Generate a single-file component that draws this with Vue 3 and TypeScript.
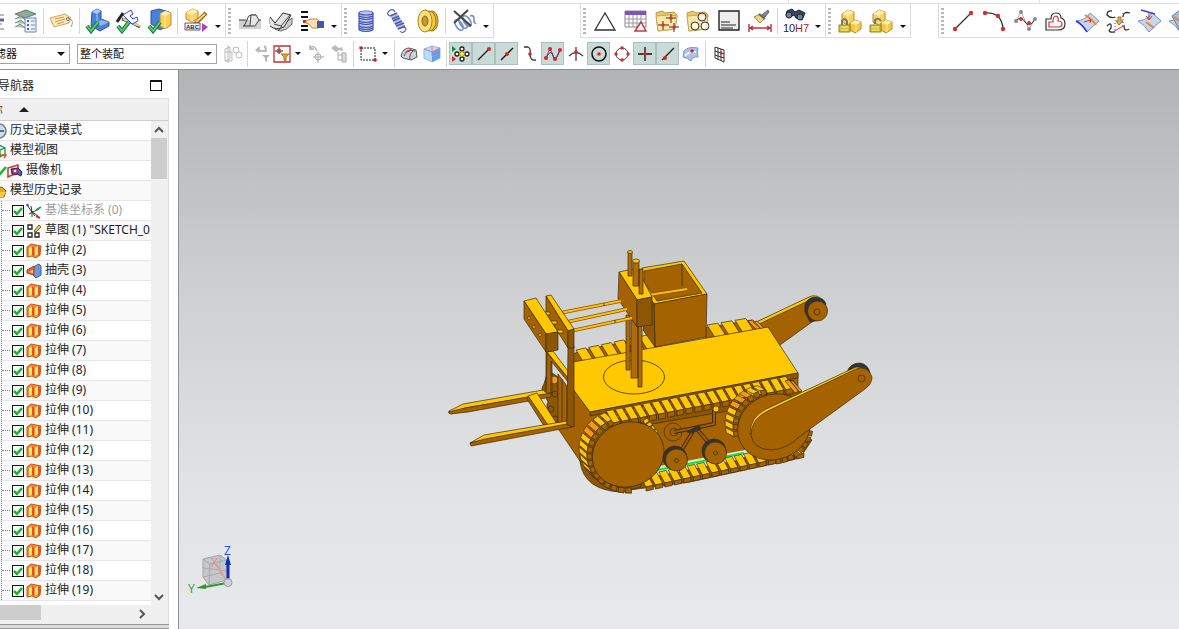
<script setup lang="ts">
interface Tool {
  kind: 'icon' | 'sep' | 'more' | 'grip'
  icon?: string
  label?: string
  on?: boolean
  narrow?: boolean
}
interface Cleat {
  top: string
  end: string
}
interface TreeRow {
  label: string
  icon: string
  level: 0 | 1 | 2
  muted?: boolean
}

const tool = (icon: string, label: string, on = false): Tool => ({ kind: 'icon', icon, label, on })
const sep: Tool = { kind: 'sep' }
const more: Tool = { kind: 'more', label: '更多' }
const grip: Tool = { kind: 'grip' }

const leftBars: Tool[][] = [
  [tool('rows', '列表'), tool('layers', '图层'), sep, tool('tag', '属性'), sep, tool('blockCheck', '检查几何体'), tool('sketchCheck', '检查草图'), tool('partCheck', '检查部件'), sep, tool('note', '注释'), more],
  [grip, tool('bendFlat', '凸起'), tool('bendCurve', '曲面凸起'), tool('hand', '选择'), more],
  [grip, tool('coil', '圆柱弹簧'), tool('spring', '拉伸弹簧'), tool('disc', '碟簧'), sep, tool('cutSpring', '删除弹簧'), more],
]
const midBars: Tool[][] = [
  [grip, tool('triangle', '基准'), tool('table', '表格'), tool('folderPoints', '点集'), tool('folderCircles', '圆集'), tool('textBox', '文本'), tool('brush', '样式'), sep, tool('find', '公差查询'), more],
  [grip, tool('lockOne', '装配约束'), tool('lockTwo', '移动组件'), more],
]
const curveBars: Tool[][] = [
  [grip, tool('line', '直线'), tool('arc', '圆弧'), tool('spline', '样条'), tool('offset', '偏置曲线'), tool('surface', '曲面上的曲线'), tool('bridge', '桥接'), tool('project', '投影曲线'), tool('intersect', '相交曲线')],
]
const selectionTools: Tool[] = [
  tool('gAssembly', '组件'), sep, tool('gFilter', '重置过滤器'),
  { kind: 'icon', icon: 'filterBox', label: '常规选择', narrow: true }, more,
  tool('gRotate', '旋转'), tool('gTree', '层级'), sep, tool('marquee', '矩形选择'), more, sep,
  tool('shade', '着色'), tool('cube', '立方体'), sep,
  tool('snap', '启用捕捉点', true), tool('endPoint', '端点', true), tool('midPoint', '中点', true),
  tool('control', '控制点'), tool('pole', '极点', true), tool('cross', '交点'),
  tool('center', '圆弧中心', true), tool('quadrant', '象限点'), tool('exist', '现有点', true),
  tool('onCurve', '点在曲线上', true), tool('onFace', '点在面上'), sep, tool('grid', '栅格点'),
]

const check = '<path d="M4 20L8 25L15 16" fill="none" stroke="#28753c" stroke-width="4"/><path d="M4 20L8 25L15 16" fill="none" stroke="#4fd070" stroke-width="2"/>'
const folder = '<path d="M4 7L10 5L13 7L22 6L25 9L23 23L6 25Z" fill="#ecc768" stroke="#b8964a"/><path d="M4 10L17 9L25 10L23 23L6 25Z" fill="#fae6a6" stroke="#c9a654"/>'
const lockBlocks = '<path d="M7 8L13 4L19 6V15L13 19L7 16Z" fill="#f8d25a" stroke="#b78a2c"/><path d="M7 8L13 10L19 6L13 4Z" fill="#ffeeb0"/><path d="M13 10V19" stroke="#fff0a8"/><path d="M15 17L20 14L26 16V23L20 27L15 24Z" fill="#f6c842" stroke="#b78a2c"/><path d="M15 17L21 19L26 16L20 14Z" fill="#ffeeb0"/><path d="M21 19V26" fill="none" stroke="#fff0a8"/>'
const plane = (extra: string) => '<path d="M4 15Q14 14 18 7Q23 11 27 15Q21 20 15 26Q11 19 4 15Z" fill="#c5d5ea" stroke="#7c93b5"/>' + extra

const icons: Record<string, string> = {
  rows: '<path d="M14 9H24M14 18H22M14 23H24" stroke="#777"/><path d="M14 14H24" stroke="#6e5aa5" stroke-width="3"/>',
  layers: '<path d="M4 8L15 4L25 8L14 12Z" fill="#8fa99b" stroke="#5f7a6c"/><path d="M4 13L10 10L14 14L25 12M4 17L10 14L14 18M4 21L9 18L14 22" fill="#b4c3ba" stroke="#74887d"/><path d="M14 12H25V26H14Z" fill="#edf2ff" stroke="#6f82c4"/><path d="M16 15H18M16 19H18M16 23H18" stroke="#4767aa" stroke-width="2"/><path d="M20 15H24M20 19H24M20 23H24" stroke="#738abd"/>',
  tag: '<path d="M3 12L18 8L24 12L22 17L7 21Z" fill="#ffe6ae" stroke="#cfa766"/><path d="M8 13L17 11M8 16L18 13M10 18L17 16" stroke="#c79d63"/><circle cx="21" cy="13" r="1.5" fill="#fff" stroke="#666"/><path d="M21 12Q28 14 24 21" fill="none" stroke="#999"/>',
  blockCheck: '<path d="M9 6L14 3L18 5V13L26 16V20L17 25L8 20Z" fill="#4a80d8" stroke="#2d529e"/><path d="M9 6L14 8L18 5L14 3Z" fill="#a9c8f8"/><path d="M14 17L18 14L26 16L18 20Z" fill="#8db4f2"/><path d="M14 8V17" stroke="#a9caff"/>' + check,
  sketchCheck: '<path d="M3 16L9 7" fill="none" stroke="#222" stroke-width="3"/><path d="M8 13L17 16L26 21" fill="none" stroke="#33475b" stroke-width="3"/><path d="M9 13L26 20" stroke="#efd67e" stroke-width="2"/><path d="M9 9L17 4L19 8L16 10L19 13L23 11L24 15L18 18Z" fill="#fff" stroke="#303fe0"/>' + check,
  partCheck: '<path d="M6 5L14 3L24 6V19L15 24L6 18Z" fill="#4a80d8" stroke="#2d529e"/><path d="M15 8L20 5L26 7V19L20 23L15 20Z" fill="#ffce55" stroke="#b78a2c"/><path d="M15 8L20 10L26 7L20 5Z" fill="#ffeeb0"/><path d="M20 10V22" stroke="#fff0a0"/>' + check,
  note: '<path d="M5 7L11 3L17 5V12L11 16L5 13Z" fill="#ffd062" stroke="#b78a2c"/><path d="M5 7L11 9L17 5L11 3Z" fill="#fff0b8"/><path d="M11 9V16" fill="none" stroke="#ffeba2"/><path d="M14 18L25 7" stroke="#996326" stroke-width="4"/><path d="M15 16L24 8" stroke="#ffd36b" stroke-width="2"/><path d="M4 17H19V24H4Z" fill="#fff" stroke="#65489e"/><text x="5" y="23" font-size="6" font-weight="bold" fill="#222">ABC</text><path d="M21 17L27 21L21 26Z" fill="#b43dc2"/>',
  bendFlat: '<path d="M4 14H26V23H4Z" fill="#d2d2d2"/><path d="M4 14H11M20 14H26M8 20H15L21 9H16Q13 9 12 14L9 20" fill="none" stroke="#333"/><path d="M16 9L21 9L24 14L20 20H15Z" fill="#e6e6e6" stroke="#444"/>',
  bendCurve: '<path d="M4 12Q13 24 26 12L26 18Q14 32 4 18Z" fill="#ccc" stroke="#666"/><path d="M4 11L9 17L17 7L25 9L18 21Q10 25 4 20" fill="#e2e2e2" stroke="#333"/><path d="M8 18L15 20L24 9M16 20L12 25" fill="none" stroke="#444"/>',
  hand: '<path d="M4 6H11M4 11H11M4 20H11M4 24H11" stroke="#111" stroke-width="2"/><path d="M6 14H9V17H6Z" fill="#d22"/><path d="M9 15L14 13H20L22 15V22H15L12 18L9 17Z" fill="#ffdfae" stroke="#b3925e"/><path d="M20 15H27V22H20Z" fill="#4057b6"/>',
  coil: '<path d="M8 6H22V25H8Z" fill="#bcc6ea"/><g fill="none" stroke="#3f55b2" stroke-width="1.2"><ellipse cx="15" cy="7" rx="7" ry="2"/><path d="M8 10Q15 13 22 10M8 12Q15 15 22 12M8 15Q15 18 22 15M8 17Q15 20 22 17M8 20Q15 23 22 20M8 22Q15 25 22 22M8 24Q15 27 22 24M8 7V24M22 7V24"/></g>',
  spring: '<path d="M8 10Q4 8 7 5Q11 2 13 6M19 22Q26 20 23 25Q20 28 18 25" fill="none" stroke="#6373a9" stroke-width="1.3"/><path d="M8 10L15 7L23 20L16 24Z" fill="#b5bfe0"/><path d="M8 10L15 7M10 13L17 10M11 15L18 12M13 18L20 15M14 20L22 17M16 23L23 20" fill="none" stroke="#4a5fa8" stroke-width="1.5"/>',
  disc: '<ellipse cx="19" cy="15" rx="6" ry="10" fill="#e3b93a" stroke="#94740f"/><ellipse cx="16" cy="15" rx="7" ry="10" fill="#f1cb3e" stroke="#94740f"/><ellipse cx="12" cy="15" rx="7" ry="11" fill="#ffe078" stroke="#a8861c"/><ellipse cx="12" cy="15" rx="3" ry="5" fill="#c59c2a" stroke="#846615"/>',
  cutSpring: '<g fill="none" stroke="#7b8ccb" stroke-width="1.7"><ellipse cx="10" cy="19" rx="3" ry="6" transform="rotate(-35 10 19)"/><ellipse cx="14" cy="17" rx="3" ry="6" transform="rotate(-35 14 17)"/><ellipse cx="18" cy="15" rx="3" ry="6" transform="rotate(-35 18 15)"/><path d="M21 10Q26 8 25 16L27 18"/></g><path d="M5 5L22 20M19 4L5 17" stroke="#444" stroke-width="2"/>',
  triangle: '<path d="M5 24L15 7L25 24Z" fill="#fff" stroke="#333" stroke-width="1.3"/>',
  table: '<path d="M4 5H25V21H4Z" fill="#fff" stroke="#888"/><path d="M4 5H25V9H4Z" fill="#7c55be"/><path d="M4 13H25M4 17H25M8 9V21M12 9V21M16 9V21M20 9V21" stroke="#999"/><path d="M14 25L20 16L25 25Z" fill="#fff" stroke="#c43a43" stroke-width="1.5"/>',
  folderPoints: folder + '<path d="M14 12H24M19 8V17M6 19H17M11 15V24M17 21H27M22 17V26" stroke="#333"/><g fill="#e92d2d"><circle cx="19" cy="12" r="1.7"/><circle cx="11" cy="19" r="1.7"/><circle cx="22" cy="21" r="1.7"/></g>',
  folderCircles: folder + '<g fill="#fff" fill-opacity=".65" stroke="#333"><circle cx="19" cy="11" r="4"/><circle cx="12" cy="20" r="4"/><circle cx="22" cy="20" r="4"/></g>',
  textBox: '<path d="M5 5H25V24H5Z" fill="#eee" stroke="#222" stroke-width="1.4"/><path d="M7 16H16M7 19H22M7 22H19" stroke="#222"/>',
  brush: '<path d="M17 9L23 4L24 6L20 11Z" fill="#8a7f96" stroke="#667"/><path d="M9 11L15 8L20 12L15 17Z" fill="#efd57a" stroke="#a3873c"/><path d="M14 8L20 13" stroke="#666" stroke-width="2"/><path d="M4 18V26M26 18V26M5 22H25M8 20L5 22L8 24M22 20L25 22L22 24" fill="none" stroke="#b9303f" stroke-width="1.4"/>',
  find: '<path d="M6 5L11 3L14 6L18 4L24 7L21 14L15 12L13 9L7 12L5 9Z" fill="#394761" stroke="#222"/><circle cx="8" cy="9" r="3" fill="#6680b0" stroke="#222"/><circle cx="19" cy="11" r="3" fill="#6680b0" stroke="#222"/><text x="2" y="26" font-size="11" fill="#222">10</text><text x="14" y="26" font-size="11" fill="#aa2332">H7</text>',
  lockOne: lockBlocks + '<path d="M7 19V15Q9 11 12 15V19" fill="none" stroke="#777" stroke-width="2"/><path d="M4 19H15V26H4Z" fill="#d6c53c" stroke="#8f8222"/><path d="M6 21H13M6 24H13" stroke="#f8ed76"/>',
  lockTwo: lockBlocks + '<path d="M9 18V14Q12 11 15 15" fill="none" stroke="#777" stroke-width="2"/><path d="M4 19H15V26H4Z" fill="#d6c53c" stroke="#8f8222"/><path d="M6 21H13M6 24H13" stroke="#f8ed76"/>',
  line: '<path d="M7 23L23 7" stroke="#333" stroke-width="1.3"/><g fill="#d33030"><circle cx="7" cy="23" r="2.2"/><circle cx="23" cy="7" r="2.2"/></g>',
  arc: '<path d="M6 7Q23 6 24 23" fill="none" stroke="#333" stroke-width="1.3"/><g fill="#d33030"><circle cx="6" cy="7" r="2.2"/><circle cx="19" cy="10" r="2.2"/><circle cx="24" cy="23" r="2.2"/></g>',
  spline: '<path d="M6 15L11 6L19 23L25 13" fill="none" stroke="#aaa"/><path d="M6 15Q11 9 15 16T25 13" fill="none" stroke="#333"/><g fill="#888"><circle cx="6" cy="15" r="2"/><circle cx="11" cy="6" r="2"/><circle cx="19" cy="23" r="2"/><circle cx="25" cy="13" r="2"/></g><g fill="#d33030"><circle cx="11" cy="13" r="2"/><circle cx="19" cy="17" r="2"/></g>',
  offset: '<path d="M5 24V13H10Q10 7 15 7Q20 7 20 12Q24 13 24 18Q24 24 17 24Z" fill="#fff" stroke="#333" stroke-width="1.2"/><path d="M8 21V16H12Q12 10 15 10Q18 11 17 15Q21 15 21 18Q21 21 17 21Z" fill="none" stroke="#d33030" stroke-width="1.2"/>',
  surface: plane('<path d="M4 15Q10 18 15 26" fill="none" stroke="#2432e4" stroke-width="1.5"/><path d="M13 9Q20 13 24 19" fill="none" stroke="#f47f31" stroke-width="2"/><path d="M12 16L19 14M17 12L19 14L18 17" fill="none" stroke="#cf3030"/>'),
  bridge: '<path d="M9 5Q4 4 4 9Q8 13 12 11M4 20Q9 15 8 22Q3 27 12 26M20 11Q20 5 27 7M21 20Q21 26 26 23" fill="none" stroke="#333" stroke-width="1.3"/><path d="M12 11V25M20 7V21" stroke="#4647b9" stroke-dasharray="1 2"/><path d="M15 11H18V15H20L16 19L13 15H15Z" fill="#f1aa4a" stroke="#9d702d"/><path d="M10 26L22 19" stroke="#e33232"/>',
  project: plane('<path d="M7 4L21 8" stroke="#303ce5" stroke-width="1.5"/><path d="M15 6V13M12 10L15 14L18 10" fill="none" stroke="#c33636"/><path d="M12 16L20 22" stroke="#f47f31" stroke-width="2"/>'),
  intersect: plane('<path d="M7 10L15 4L23 19L15 25Z" fill="#a5bdde" stroke="#637ea4"/><path d="M9 11L23 21" stroke="#f47f31" stroke-width="2"/>'),
  gAssembly: '<g fill="none" stroke="#bbb"><path d="M7 10L12 8V20L7 22ZM7 13H14V22H7M10 6V24"/><circle cx="18" cy="11" r="3"/><circle cx="21" cy="16" r="3"/></g>',
  gFilter: '<path d="M12 8V12H19Q19 8 17 7" fill="none" stroke="#bbb" stroke-width="2"/><path d="M8 11L12 8V14ZM15 16H23L20 19V23L18 22V19Z" fill="#b5b5b5"/>',
  filterBox: '<path d="M7 7H23V23H7Z" fill="#fff" stroke="#c22f3b" stroke-width="1.3"/><path d="M12 8V15M8 12H16" stroke="#333"/><circle cx="12" cy="12" r="2" fill="none" stroke="#c33"/><path d="M14 15H22L19 18V22L17 21V18Z" fill="#e6a725" stroke="#ae7716"/>',
  gRotate: '<path d="M9 9Q13 5 16 12M9 6V10H13" fill="none" stroke="#aaa" stroke-width="1.3"/><path d="M17 13V24M12 18H23" stroke="#aaa"/><circle cx="17" cy="18" r="3" fill="none" stroke="#aaa"/>',
  gTree: '<path d="M7 9L11 6L15 9L18 8L19 12L15 11L12 13Z" fill="#bbb"/><path d="M14 13V21H20M14 16H20" fill="none" stroke="#aaa"/><path d="M18 14H22V23H18Z" fill="#ddd" stroke="#aaa"/>',
  marquee: '<path d="M8 9H22V21H8Z" fill="none" stroke="#222" stroke-dasharray="2 1"/><circle cx="8" cy="9" r="1.8" fill="#d12"/><circle cx="22" cy="21" r="1.8" fill="#d12"/>',
  shade: '<path d="M7 17Q9 9 15 9L22 11L23 18L17 21L9 19Z" fill="#ccd3dd" stroke="#555"/><path d="M10 17Q12 11 16 11L21 12M16 21Q15 15 19 12" fill="none" stroke="#555"/><path d="M12 13L17 11" stroke="#e32c2c" stroke-width="1.5"/>',
  cube: '<path d="M7 10L15 7L23 9V19L15 23L7 19Z" fill="#b9ddf7" stroke="#8fbde4"/><path d="M15 13L23 9V19L15 23Z" fill="#6c9bec"/><path d="M7 10L15 13L23 9M15 7V17" fill="none" stroke="#d6808a"/>',
  snap: '<path d="M6 7L10 10L6 13Z" fill="#079629"/><path d="M6 17L10 20L6 23Z" fill="#da2929"/><g fill="#fff" stroke="#222" stroke-width="1.3"><circle cx="16" cy="10" r="2"/><circle cx="16" cy="20" r="2"/><circle cx="11" cy="15" r="2"/><circle cx="21" cy="15" r="2"/></g><path d="M16 12L19 15L16 18L13 15Z" fill="#ffe630" stroke="#9c8c00"/>',
  endPoint: '<path d="M9 21L20 10" stroke="#111" stroke-width="1.3"/><circle cx="20" cy="10" r="2" fill="#e12222"/>',
  midPoint: '<path d="M9 21L21 9" stroke="#111" stroke-width="1.3"/><circle cx="15" cy="15" r="2" fill="#e12222"/>',
  control: '<path d="M9 8H13Q16 9 15 15Q15 22 21 21" fill="none" stroke="#333" stroke-width="1.3"/><circle cx="15" cy="15" r="1.8" fill="#e12222"/>',
  pole: '<path d="M8 19L12 9L17 21L22 11" fill="none" stroke="#a337d1"/><path d="M8 19Q13 9 15 17T22 11" fill="none" stroke="#333"/><g fill="#e12222"><circle cx="8" cy="19" r="2"/><circle cx="12" cy="10" r="2"/><circle cx="17" cy="20" r="2"/><circle cx="22" cy="11" r="2"/></g>',
  cross: '<path d="M15 8V22M8 17Q15 10 22 17" fill="none" stroke="#444" stroke-width="1.3"/><circle cx="15" cy="13" r="1.8" fill="#e12222"/>',
  center: '<circle cx="15" cy="15" r="7" fill="none" stroke="#111" stroke-width="1.5"/><circle cx="15" cy="15" r="1.8" fill="#e12222"/>',
  quadrant: '<circle cx="15" cy="15" r="6" fill="none" stroke="#444"/><g fill="#d22"><circle cx="15" cy="9" r="1.7"/><circle cx="15" cy="21" r="1.7"/><circle cx="9" cy="15" r="1.7"/><circle cx="21" cy="15" r="1.7"/></g>',
  exist: '<path d="M8 15H22M15 8V22" stroke="#111" stroke-width="1.3"/><circle cx="15" cy="15" r="1.8" fill="#e12222"/>',
  onCurve: '<path d="M9 21L21 9" stroke="#111" stroke-width="1.3"/><circle cx="12" cy="19" r="2" fill="#e12222"/>',
  onFace: '<path d="M8 12Q12 7 22 9Q21 13 22 18Q17 17 15 22Q12 19 7 18Z" fill="#a9c2ec" stroke="#7d97c4"/><path d="M9 17Q13 12 20 13" fill="none" stroke="#e3eeff" stroke-width="2"/><circle cx="16" cy="12" r="1.8" fill="#d22"/>',
  grid: '<path d="M10 8L19 11V23L10 19ZM10 12L19 15M10 16L19 19M13 9V21M16 10V22" fill="none" stroke="#333"/><circle cx="16" cy="14" r="1.5" fill="#d22"/>',
}

const treeIcons: Record<string, string> = {
  clock: '<circle cx="8" cy="8" r="7" fill="#cfdbe5" stroke="#6b7882" stroke-width="1.5"/><path d="M8 4V8H13" fill="none" stroke="#2a4d72" stroke-width="1.3"/>',
  views: '<path d="M3 5L8 2L14 5V11L9 14L3 11ZM3 5L9 7L14 5M9 7V14" fill="#e8fff0" stroke="#159b51" stroke-width="1.3"/><path d="M9 12H15L13 15" fill="none" stroke="#e34c23" stroke-width="1.5"/>',
  camera: '<path d="M1 5L11 2V11L5 12L1 14Z" fill="#fff" stroke="#df2d22" stroke-width="1.5"/><path d="M4 6L11 5L15 9L14 13L10 11L5 11Z" fill="#575ba3" stroke="#222267"/><circle cx="8" cy="8" r="2" fill="#f7ecff" stroke="#a32347"/>',
  folder: '<path d="M1 6L11 4L15 8L13 14H3Z" fill="#e6a323" stroke="#8d5b0e"/><path d="M4 9H15L12 14H2Z" fill="#ffca45"/>',
  datum: '<path d="M2 3L5 8L12 13M5 3L6 9L9 13M3 11L13 6M6 8V14" fill="none" stroke="#333"/><path d="M10 7L15 4" stroke="#27a245" stroke-width="2"/><path d="M10 13L14 15" stroke="#c83434" stroke-width="2"/><circle cx="1.500" cy="2" r="1.3" fill="#3847df"/>',
  sketch: '<path d="M2 2H6V6H2ZM2 10H6V14H2ZM9 10H13V14H9Z" fill="#fff" stroke="#222" stroke-width="1.3"/><path d="M8 8L13 2L15 4L10 9Z" fill="#f3c74a" stroke="#7d5a17"/>',
  extrude: '<path d="M1 4L5 1L10 2L15 3L14 12L10 15L6 13L1 14Z" fill="#f58a2c" stroke="#c25a18"/><path d="M3 5L6 4V12L3 13ZM9 5L12 3V11L9 13Z" fill="#fff06c"/><path d="M6 3L8 5V13L6 12ZM12 3L14 4V12L12 13Z" fill="#eb4f27"/>',
  shell: '<path d="M7 4L13 1L15 3V12L10 15L7 12Z" fill="#6f97d8" stroke="#3c5f9e"/><path d="M1 7L8 3V12L1 10Z" fill="#ea6535" stroke="#a8431f"/><path d="M3 9L7 7V10Z" fill="#ffdc9b"/>',
}

const rows: TreeRow[] = [
  { label: '历史记录模式', icon: 'clock', level: 0 },
  { label: '模型视图', icon: 'views', level: 0 },
  { label: '摄像机', icon: 'camera', level: 1 },
  { label: '模型历史记录', icon: 'folder', level: 0 },
  { label: '基准坐标系 (0)', icon: 'datum', level: 2, muted: true },
  { label: '草图 (1) "SKETCH_0', icon: 'sketch', level: 2 },
  { label: '拉伸 (2)', icon: 'extrude', level: 2 },
  { label: '抽壳 (3)', icon: 'shell', level: 2 },
  ...Array.from({ length: 16 }, (_, i): TreeRow => ({ label: `拉伸 (${i + 4})`, icon: 'extrude', level: 2 })),
]

const pt = (x: number, y: number) => `${x.toFixed(1)},${y.toFixed(1)}`

// Slanted cleats spaced evenly along a straight run of track.
function run(x0: number, y0: number, x1: number, y1: number, count: number, dx: number, dy: number, cap: number): Cleat[] {
  const sx = (x1 - x0) / count
  const sy = (y1 - y0) / count
  return Array.from({ length: count }, (_, i) => {
    const x = x0 + sx * i
    const y = y0 + sy * i
    const w = 0.78
    const bx = x + dx
    const by = y + dy
    return {
      top: [pt(x, y), pt(x + sx * w, y + sy * w), pt(bx + sx * w, by + sy * w), pt(bx, by)].join(' '),
      end: [pt(bx, by), pt(bx + sx * w, by + sy * w), pt(bx + sx * w, by + sy * w + cap), pt(bx, by + cap)].join(' '),
    }
  })
}

// Cleats wrapped round a wheel between two angles, in degrees.
function wrap(cx: number, cy: number, rx: number, ry: number, from: number, to: number, count: number, dx: number, dy: number): Cleat[] {
  const at = (deg: number, k: number) => {
    const a = (deg * Math.PI) / 180
    return [cx + (rx + k) * Math.cos(a), cy + (ry + k) * Math.sin(a)]
  }
  const step = (to - from) / count
  return Array.from({ length: count }, (_, i) => {
    const a = from + step * i
    const b = a + step * 0.75
    const [ax, ay] = at(a, 5)
    const [bx, by] = at(b, 5)
    const [ix, iy] = at(a, 0)
    const [jx, jy] = at(b, 0)
    return {
      top: [pt(ax + dx, ay + dy), pt(bx + dx, by + dy), pt(bx, by), pt(ax, ay)].join(' '),
      end: [pt(ax, ay), pt(bx, by), pt(jx, jy), pt(ix, iy)].join(' '),
    }
  })
}

const backTrack = [...run(576, 350, 652, 334, 6, 8, 13, 3), ...run(707, 325, 749, 318, 3, 9, 14, 3)]
const topTrack = run(606, 411, 788, 376, 20, 7, 12, 5)
const bottomTrack = run(640, 476, 800, 442, 17, 6, 11, 4)
const frontWrap = wrap(628, 455, 36, 33, 85, 262, 16, -8, -7)
const rearInner = wrap(773, 427, 35, 33, 165, 262, 9, -8, -4)
const rearOuter = wrap(773, 426, 35, 33, 8, 88, 8, 2, 0)
const innerFront = run(643, 421, 655, 436, 4, 4, -3, 2)
</script>

<template>
  <div class="app">
    <header class="head">
      <div class="seam"><i></i><i></i></div>
      <div class="bars">
        <div v-for="(group, g) in [leftBars, midBars, curveBars]" :key="g" class="group" :class="'group-' + g">
          <div v-for="(bar, b) in group" :key="b" class="bar" role="toolbar">
            <template v-for="(t, i) in bar" :key="i">
              <span v-if="t.kind === 'grip'" class="grip"></span>
              <span v-else-if="t.kind === 'sep'" class="sep"></span>
              <button v-else-if="t.kind === 'more'" class="more" type="button" :aria-label="t.label"><span class="caret"></span></button>
              <button v-else class="tool" type="button" :aria-label="t.label">
                <svg viewBox="0 0 30 30" v-html="icons[t.icon!]"></svg>
              </button>
            </template>
          </div>
        </div>
      </div>
      <div class="selection">
        <div class="pick pick-filter">
          <select aria-label="类型过滤器"><option>没有选择过滤器</option></select>
          <span class="caret"></span>
        </div>
        <div class="pick pick-scope">
          <select aria-label="选择范围"><option>整个装配</option></select>
          <span class="caret"></span>
        </div>
        <template v-for="(t, i) in selectionTools" :key="i">
          <span v-if="t.kind === 'sep'" class="sep"></span>
          <button v-else-if="t.kind === 'more'" class="more" type="button" :aria-label="t.label"><span class="caret"></span></button>
          <button v-else class="snap" :class="{ on: t.on, narrow: t.narrow }" type="button" :aria-label="t.label">
            <svg viewBox="0 0 30 30" v-html="icons[t.icon!]"></svg>
          </button>
        </template>
      </div>
    </header>

    <div class="body">
      <aside class="side">
        <div class="title">
          <h1>导航器</h1>
          <button class="max" type="button" aria-label="最大化"></button>
        </div>
        <div class="navigator">
          <div class="columns"><span class="name">名称</span><span class="sort"></span></div>
          <div class="scroller">
            <ul class="tree">
              <li v-for="row in rows" :key="row.label" class="row" :class="['level-' + row.level, { muted: row.muted }]">
                <label v-if="row.level === 2" class="entry">
                  <span class="twig"></span>
                  <span class="tick">
                    <input type="checkbox" checked />
                    <svg viewBox="0 0 12 12"><path d="M2 6L5 9L10 3" /></svg>
                  </span>
                  <svg class="glyph" viewBox="0 0 16 16" v-html="treeIcons[row.icon]"></svg>
                  <span>{{ row.label }}</span>
                </label>
                <span v-else class="entry">
                  <svg v-if="row.level === 1" class="seen" viewBox="0 0 12 12"><path d="M1 6L4 10L11 2" /></svg>
                  <svg class="glyph" viewBox="0 0 16 16" v-html="treeIcons[row.icon]"></svg>
                  <span>{{ row.label }}</span>
                </span>
              </li>
            </ul>
            <div class="vbar">
              <button type="button" aria-label="向上滚动"><svg viewBox="0 0 16 16"><path d="M4 10L8 6L12 10" /></svg></button>
              <span class="thumb"></span>
              <button class="last" type="button" aria-label="向下滚动"><svg viewBox="0 0 16 16"><path d="M4 6L8 10L12 6" /></svg></button>
            </div>
          </div>
          <div class="hbar">
            <span class="thumb"></span>
            <button type="button" aria-label="向右滚动"><svg viewBox="0 0 16 16"><path d="M6 4L10 8L6 12" /></svg></button>
          </div>
        </div>
        <div class="splitter"></div>
      </aside>

      <main class="canvas">
        <svg class="scene" viewBox="179 70 1000 559" preserveAspectRatio="xMinYMin meet" role="img" aria-label="履带机器人模型">
          <!-- far flipper -->
          <g class="edge">
            <path class="dark" d="M752 324L810 299Q825 296 827 310Q825 319 812 322L780 345Z" />
            <path class="gold" d="M752 324L809 297Q815 294 820 298L810 300L757 325Z" />
            <path class="tyre" d="M805 312Q803 299 814 297Q824 297 826 304L821 318L810 322Z" />
            <circle class="dark" cx="817.500" cy="311" r="10" />
            <circle class="dark" cx="817" cy="312" r="3" />
          </g>

          <!-- far track -->
          <g class="edge">
            <path class="dark" d="M570 356L579 351L655 336L661 347L573 364ZM704 328L752 320L762 330L706 340Z" />
            <template v-for="(c, i) in backTrack" :key="i"><polygon class="gold" :points="c.top" /></template>
            <path class="amber" d="M748 321L753 320L761 329L757 330ZM753 322L757 321L764 328L761 329Z" />
          </g>

          <!-- hull -->
          <g class="edge">
            <path class="dark" d="M557 427L573 388L590 412L798 373V388L735 460L655 470L610 490L596 485Z" />
            <path class="gold" d="M573 362L768 327L798 373L590 412L573 389Z" />
            <path class="shade" d="M590 412L798 373V378L590 416Z" />
            <ellipse class="line" cx="634" cy="377" rx="30.500" ry="17" />
          </g>

          <!-- near track -->
          <path class="gap" d="M654 467L745 450L752 456L740 461L650 474Z" />
          <path class="green" d="M652 471L744 453" />
          <g class="edge">
            <path class="shade" d="M603 419L793 380L801 392L787 401L640 426L600 432Z" />
            <path class="shade" d="M622 483L735 461L805 436L812 440L800 458L690 482L622 491Z" />
            <template v-for="(c, i) in bottomTrack" :key="'b' + i"><polygon class="gold" :points="c.top" /><polygon class="dark" :points="c.end" /></template>
            <path class="shade" d="M605 417Q578 429 580 462Q584 490 620 492L641 487L635 430Z" />
            <template v-for="(c, i) in frontWrap" :key="'f' + i">
              <polygon :class="i > 10 && i < 13 ? 'amber' : i < 6 ? 'dark' : 'gold'" :points="c.top" /><polygon class="dark" :points="c.end" />
            </template>
            <template v-for="(c, i) in topTrack" :key="'t' + i"><polygon class="gold" :points="c.top" /><polygon class="dark" :points="c.end" /></template>
            <template v-for="(c, i) in innerFront" :key="'n' + i"><polygon class="gold" :points="c.top" /></template>
            <path class="amber" d="M785 381L789 380L799 391L795 393ZM790 380L793 381L802 391L799 392Z" />
            <ellipse class="dark" cx="628" cy="454.500" rx="36.500" ry="32" transform="rotate(-22 628 454)" />
          </g>

          <!-- suspension -->
          <g class="edge">
            <circle class="dark" cx="673" cy="432" r="9" />
            <circle class="dark" cx="674" cy="432" r="4" />
            <path class="link" d="M674 432L714 424V410M695 428L681 451M696 428L713 448" />
            <path class="linkfill" d="M674 432L714 424V410M695 428L681 451M696 428L713 448" />
            <path class="tyre" d="M687 432L699 425L701 429L692 433Z" />
            <circle class="gold" cx="716" cy="409" r="3" />
            <circle class="tyre" cx="675" cy="458" r="12" />
            <circle class="dark" cx="676.500" cy="460" r="11" />
            <circle class="dark" cx="676.500" cy="460.500" r="2" />
            <circle class="tyre" cx="714" cy="451" r="12" />
            <circle class="dark" cx="715.500" cy="453" r="11" />
            <circle class="dark" cx="715.500" cy="453" r="2" />
          </g>

          <!-- drive wheel and near flipper -->
          <g class="edge">
            <template v-for="(c, i) in rearInner" :key="'i' + i"><polygon :class="i > 3 && i < 7 ? 'amber' : 'gold'" :points="c.top" /><polygon class="dark" :points="c.end" /></template>
            <template v-for="(c, i) in rearOuter" :key="'o' + i"><polygon class="dark" :points="c.end" /></template>
            <ellipse class="dark" cx="774" cy="427" rx="37" ry="32.500" transform="rotate(-22 774 427)" />
            <path class="tyre" d="M847 372Q850 363 860 363Q868 364 870 373Z" />
            <path class="gold" d="M750 434Q750 417 766 409L856 367L866 368L770 413Z" />
            <path class="dark" d="M751 435Q751 419 768 411L856 369Q868 365 872 377Q872 384 865 389L799 437Q787 449 771 450Q753 449 751 435Z" />
            <circle class="dark" cx="861.500" cy="378.500" r="3.500" />
          </g>

          <!-- storage bin -->
          <g class="edge">
            <path class="gold" d="M642 268L684 261L707 294L654 304L640 283Z" />
            <path class="dark" d="M644 271L682 264L702 293L657 301L644 282Z" />
            <path class="line" d="M682 264V286" />
            <path class="dark" d="M654 304L707 294L706 337L655 347Z" />
            <path class="shade" d="M650 298L654 304L655 347L643 330Z" />
          </g>
          <path class="rodline" d="M649 295L687 289" />
          <path class="rod" d="M649 295L687 289" />

          <!-- mast -->
          <g class="edge">
            <path class="bronze" d="M626 315H630V370H626ZM631 320H638V378H631ZM638 325H642V387H638Z" />
            <path class="gold" d="M619 272L637 268L652 297L637 300Z" />
            <path class="dark" d="M619 272L637 300V327L618 299Z" />
            <path class="shade" d="M637 300L652 297V325L637 327Z" />
            <path class="bronze" d="M628 252H632V276H628ZM633 261H639V286H633ZM639 269H643V294H639Z" />
            <ellipse class="gold" cx="630" cy="252" rx="2.500" ry="1.500" />
            <ellipse class="gold" cx="636" cy="261" rx="3.500" ry="2" />
          </g>
          <g>
            <path class="rodline" d="M560 313L621 301M562 323L627 309M566 332L632 318" />
            <path class="rod" d="M560 313L621 301M562 323L627 309M566 332L632 318" />
            <path class="line" d="M604 303V306M615 320V323" />
          </g>

          <!-- fork lift -->
          <g class="edge">
            <path class="shade" d="M544 384Q540 389 544 394L548 402Q545 407 550 412L553 424H559L558 377L548 370Z" />
            <circle class="amber" cx="554" cy="380" r="4" />
            <circle class="shade" cx="555" cy="394" r="3" />
            <circle class="shade" cx="551" cy="409" r="3" />
            <circle class="shade" cx="555" cy="419" r="3" />
            <path class="dark" d="M558 374L567 386V424L558 422Z" />
            <path class="line" d="M562 379V423" />
            <path class="dark" d="M546 351H552V393L546 391Z" />
            <path class="gold" d="M547 352L553 351L568 371V378Z" />
            <path class="dark" d="M547 353L568 378V382L551 361V393H546Z" />
            <path class="gold" d="M449 411L463 404L543 390L548 394L465 408L451 414Z" />
            <path class="dark" d="M448 412L465 408L551 393V397L468 412L450 414Z" />
            <path class="gold" d="M528 396L537 393L557 424L548 426Z" />
            <path class="dark" d="M528 396L548 425L544 426L527 399Z" />
            <path class="gold" d="M470 443L484 435L567 421V426L486 440Z" />
            <path class="dark" d="M470 443L485 439L567 424L572 427L487 443L471 446Z" />
            <path class="shade" d="M568 346H574V427L567 425Z" />
            <path class="gold" d="M546 296L551 295L574 329L568 331Z" />
            <path class="dark" d="M546 296L568 331V348L546 313Z" />
            <path class="shade" d="M568 331L574 329V348H568Z" />
            <path class="gold" d="M545 312H550V315H547ZM550 321H557V324H552ZM557 330H563V333H558Z" />
            <path class="gold" d="M524 301L536 298L558 332L546 334Z" />
            <path class="dark" d="M524 301L546 334V352L524 319Z" />
            <path class="shade" d="M546 334L558 332V350L546 352Z" />
            <circle class="gold" cx="529" cy="318" r="1.500" />
            <circle class="gold" cx="534" cy="327" r="1.500" />
            <circle class="gold" cx="540" cy="335" r="1.500" />
          </g>

          <!-- view triad -->
          <g>
            <path class="ghost" d="M203 559L220 555L227 560V580L209 585L203 577Z" />
            <path class="ghostline" d="M203 559L210 564L227 560M210 564L209 585M203 577L220 573L227 580M220 555V573M203 568L227 571" />
            <path class="xaxis" d="M216 564L227 581" />
            <path class="zaxis" d="M228 582V564" />
            <path class="zhead" d="M225 565L228 555L231 565Z" />
            <path class="yaxis" d="M227 583L205 587" />
            <path class="yhead" d="M206 584L196 588L206 589Z" />
            <circle class="ball" cx="228" cy="582.500" r="4" />
            <text class="tx" x="211" y="567">X</text>
            <text class="ty" x="188" y="593">Y</text>
            <text class="tz" x="224" y="555">Z</text>
          </g>
        </svg>
      </main>
    </div>
  </div>
</template>

<style>
html,
body {
  background: #fff;
  overflow: hidden;
}
</style>

<style scoped>
.app {
  display: flex;
  flex-direction: column;
  height: 100vh;
  overflow: hidden;
  background: #fff;
  color: #1e1e1e;
  font-family: "Noto Sans", "Noto Sans CJK SC", sans-serif;
  font-size: 12px;
}
.app * {
  box-sizing: border-box;
}
button {
  margin: 0;
  padding: 0;
  border: 0;
  background: none;
  display: flex;
  align-items: center;
  justify-content: center;
  flex: none;
}
.head {
  flex: none;
  border-bottom: 1px solid #8b9195;
}
.seam {
  display: flex;
  justify-content: flex-end;
  height: 4px;
  border-bottom: 1px solid #dedede;
}
.seam i {
  width: 1px;
  background: #dedede;
  margin-right: 139px;
}
.seam i:first-child {
  margin-right: 250px;
}
.bars {
  display: flex;
  height: 34px;
}
.group {
  display: flex;
  flex: none;
}
.group-0 {
  margin-left: -22px;
  margin-right: 86px;
}
.group-1 {
  margin-right: 27px;
}
.bar {
  display: flex;
  align-items: center;
  padding-right: 1px;
  border-left: 1px solid #dedede;
  border-bottom: 1px solid #dedede;
}
.bar:last-child {
  border-right: 1px solid #dedede;
}
.tool {
  width: 31px;
  height: 30px;
}
.tool svg {
  width: 30px;
  height: 30px;
}
.grip {
  width: 3px;
  height: 26px;
  margin: 0 3px 0 2px;
  flex: none;
  background: repeating-linear-gradient(#b8b8b8 0 2px, #fff 2px 4px);
}
.sep {
  width: 6px;
  height: 26px;
  flex: none;
  background: linear-gradient(#d6d6d6, #d6d6d6) center / 1px 100% no-repeat;
}
.bar .sep {
  width: 5px;
}
.more {
  width: 13px;
  height: 26px;
}
.bar .more {
  padding-top: 12px;
}
.caret {
  border: 3px solid transparent;
  border-top-color: #111;
  border-bottom: 0;
}
.selection {
  display: flex;
  align-items: center;
  height: 31px;
}
.pick {
  position: relative;
  height: 20px;
  flex: none;
}
.pick select {
  width: 100%;
  height: 100%;
  appearance: none;
  border: 1px solid #a5a5a5;
  border-radius: 0;
  background: #fff;
  color: #111;
  font: inherit;
  font-size: 11px;
  line-height: 16px;
  padding: 0 2px;
}
.pick .caret {
  position: absolute;
  right: 5px;
  top: 8px;
  border-width: 4px 4px 0;
}
.pick-filter {
  width: 133px;
  margin-left: -63px;
  margin-right: 7px;
}
.pick-scope {
  width: 140px;
  margin-right: 4px;
}
.snap {
  width: 23px;
  height: 23px;
  overflow: hidden;
}
.snap.narrow {
  width: 18px;
  overflow: visible;
}
.snap svg {
  width: 30px;
  height: 30px;
  flex: none;
}
.snap.on {
  background: #cadad7;
  border: 1px solid #a9c1bc;
}
.selection .more {
  width: 12px;
}
.selection .narrow + .more {
  width: 13px;
}
.body {
  display: flex;
  flex: 1;
  min-height: 0;
}
.side {
  width: 179px;
  flex: none;
  display: flex;
  flex-direction: column;
  border-right: 1px solid #8b9195;
  overflow: hidden;
}
.title {
  display: flex;
  align-items: center;
  justify-content: space-between;
  height: 28px;
  padding: 2px 16px 0 0;
  flex: none;
}
.title h1 {
  margin: 0 0 0 -2px;
  font-size: 12px;
  font-weight: 400;
}
.max {
  width: 12px;
  height: 11px;
  border: 1px solid #111;
  border-top-width: 2px;
}
.navigator {
  flex: 1;
  min-height: 0;
  display: flex;
  flex-direction: column;
  margin-right: 9px;
  border-top: 1px solid #dedede;
  border-right: 1px solid #dedede;
  background: #f0f0f0;
}
.columns {
  display: flex;
  align-items: center;
  height: 22px;
  flex: none;
  border-bottom: 1px solid #cfcfcf;
  color: #843d3d;
}
.name {
  margin-left: -21px;
  width: 40px;
}
.sort {
  border: 5px solid transparent;
  border-bottom-color: #222;
  border-top: 0;
}
.scroller {
  display: flex;
  flex: 1;
  min-height: 0;
}
.tree {
  flex: 1;
  min-width: 0;
  margin: 0;
  padding: 0;
  list-style: none;
  overflow: hidden;
  background: #fff;
}
.row {
  height: 20px;
  border-bottom: 1px solid #e6e6e6;
  overflow: hidden;
  white-space: nowrap;
}
.row:nth-child(even) {
  background: #f9f9f9;
}
.row.muted {
  color: #a0a0a0;
}
.entry {
  display: flex;
  align-items: center;
  height: 19px;
  line-height: 17px;
}
.entry > span:last-child {
  padding-bottom: 2px;
}
.glyph {
  width: 16px;
  height: 16px;
  flex: none;
  margin-right: 3px;
}
.level-0 .entry {
  margin-left: -9px;
}
.level-1 .entry {
  margin-left: -5px;
}
.level-2 .entry {
  border-left: 1px dotted #888;
  margin-left: 1px;
}
.seen {
  width: 12px;
  height: 12px;
  flex: none;
}
.twig {
  width: 8px;
  border-top: 1px dotted #888;
  margin-right: 2px;
  flex: none;
}
.tick {
  position: relative;
  width: 12px;
  height: 12px;
  margin-right: 2px;
  flex: none;
}
.tick input {
  display: block;
  width: 12px;
  height: 12px;
  margin: 0;
  appearance: none;
  border: 1px solid #111;
  background: #fff;
}
.tick svg {
  position: absolute;
  inset: 0;
}
.tick path,
.seen path {
  fill: none;
  stroke: #12b82c;
  stroke-width: 2.5;
}
.vbar {
  width: 16px;
  margin-right: 1px;
  display: flex;
  flex-direction: column;
  flex: none;
}
.vbar button,
.hbar button {
  width: 16px;
  height: 17px;
}
.vbar svg,
.hbar svg {
  width: 16px;
  height: 16px;
  fill: none;
  stroke: #555;
  stroke-width: 2;
}
.vbar .thumb {
  height: 41px;
  background: #cdcdcd;
}
.vbar .last {
  margin-top: auto;
}
.hbar {
  height: 19px;
  display: flex;
  justify-content: space-between;
  padding-right: 18px;
  flex: none;
}
.hbar .thumb {
  width: 41px;
  height: 15px;
  background: #cdcdcd;
}
.splitter {
  height: 5px;
  margin-right: 9px;
  flex: none;
  border-top: 1px solid #999;
  border-bottom: 1px solid #999;
  background: #dcdcdc;
}
.canvas {
  flex: 1;
  min-width: 0;
  background: linear-gradient(#b2b3b4, #cdced0 37%, #e1e2e4 73%, #e7e9eb);
}
.scene {
  display: block;
  width: 100%;
  height: 100%;
}
.edge > * {
  stroke: #3a2d16;
  stroke-width: 0.7;
  stroke-linejoin: round;
}
.gold {
  fill: #ffc800;
}
.amber {
  fill: #f79a12;
}
.dark {
  fill: #a56200;
}
.shade {
  fill: #8d5604;
}
.bronze {
  fill: #b06a06;
}
.tyre {
  fill: #333;
}
.line {
  fill: none;
  stroke: #3a2d16;
  stroke-width: 0.8;
}
.gap {
  fill: #dfe1e3;
}
.green {
  stroke: #00f028;
  stroke-width: 2;
}
.edge > .link {
  fill: none;
  stroke: #3a2d16;
  stroke-width: 4;
}
.edge > .linkfill {
  fill: none;
  stroke: #9d5d00;
  stroke-width: 2;
}
.rodline {
  fill: none;
  stroke: #8a5708;
  stroke-width: 3.5;
}
.rod {
  fill: none;
  stroke: #ffbd0a;
  stroke-width: 2;
}
.ghost {
  fill: #c6c7c9;
  stroke: #a3a4a6;
}
.ghostline {
  fill: none;
  stroke: #a8a9ab;
}
.xaxis {
  stroke: #dda0a2;
  stroke-width: 2;
}
.zaxis {
  stroke: #0b2fb5;
  stroke-width: 3;
}
.zhead {
  fill: #0b2fb5;
}
.yaxis {
  stroke: #2e9a35;
  stroke-width: 2;
}
.yhead {
  fill: #2e9a35;
}
.ball {
  fill: #d2d2d2;
  stroke: #999;
}
.scene text {
  font-size: 12px;
}
.tx {
  fill: #dd9294;
}
.ty {
  fill: #3f9d46;
}
.tz {
  fill: #2a50ff;
}
</style>
